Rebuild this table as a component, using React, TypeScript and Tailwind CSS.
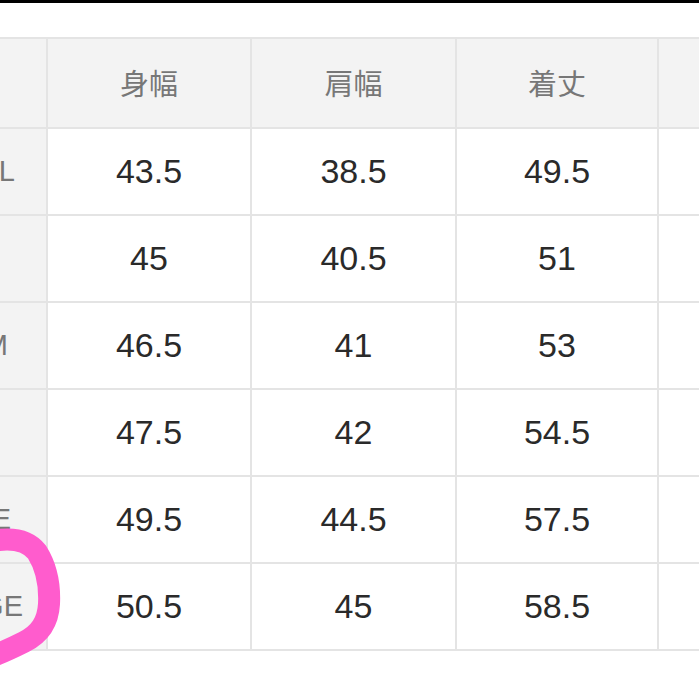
import React from "react";

const headers = ["身幅", "肩幅", "着丈", ""];

const rows: { label: string; pad: string; values: string[] }[] = [
  { label: "SMALL", pad: "pr-[31px]", values: ["43.5", "38.5", "49.5", ""] },
  { label: "", pad: "pr-[31px]", values: ["45", "40.5", "51", ""] },
  { label: "MEDIUM", pad: "pr-[38px]", values: ["46.5", "41", "53", ""] },
  { label: "", pad: "pr-[31px]", values: ["47.5", "42", "54.5", ""] },
  { label: "LARGE", pad: "pr-[35px]", values: ["49.5", "44.5", "57.5", ""] },
  { label: "X-LARGE", pad: "pr-[23px]", values: ["50.5", "45", "58.5", ""] },
];

export default function App() {
  return (
    <div className="relative w-[699px] h-[699px] overflow-hidden bg-white font-['Liberation_Sans','Noto_Sans_CJK_JP',sans-serif]">
      {/* top black strip */}
      <div className="h-[3px] bg-black" />
      <div className="h-[34px] bg-white" />

      {/* size table */}
      <div className="w-[859px] grid grid-cols-[46px_202px_203px_200px_200px] grid-rows-[88px_repeat(6,85px)] gap-[2px] bg-[#e4e4e4] border-y-2 border-[#e4e4e4]">
        <div className="bg-[#f3f3f3]" />
        {headers.map((h, i) => (
          <div
            key={i}
            className="bg-[#f3f3f3] flex items-center justify-center text-[29px] text-[#777777] font-['Noto_Sans_CJK_JP',sans-serif]"
          >
            {h}
          </div>
        ))}

        {rows.map((r, ri) => (
          <React.Fragment key={ri}>
            <div className={`bg-[#f3f3f3] flex items-center justify-end overflow-hidden text-[29px] text-[#777777] whitespace-nowrap ${r.pad}`}>
              <span className="-mr-[400px] pr-[400px]">{r.label}</span>
            </div>
            {r.values.map((v, vi) => (
              <div
                key={vi}
                className="bg-white flex items-center justify-center text-[34px] text-[#2a2a2a]"
              >
                {v}
              </div>
            ))}
          </React.Fragment>
        ))}
      </div>

      {/* pink marker circle */}
      <svg
        className="absolute left-0 top-[520px]"
        width="90"
        height="160"
        viewBox="0 0 90 160"
        fill="none"
      >
        <path
          d="M-8 21 C 8 18, 26 18, 37 32 C 47 48, 50 64, 49 84 C 48 102, 40 114, 24 122 C 12 128, 2 133, -10 137"
          stroke="#ff5ccd"
          strokeWidth="22"
          strokeLinecap="round"
          strokeLinejoin="round"
        />
      </svg>
    </div>
  );
}
